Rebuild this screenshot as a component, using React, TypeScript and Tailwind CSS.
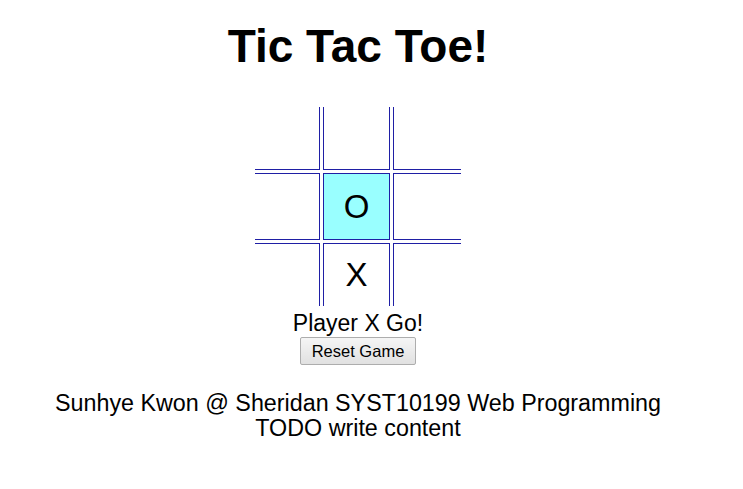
const board = [
  ["", "", ""],
  ["", "O", ""],
  ["", "X", ""],
];

const cells = [
  ["w-[65px] h-[63px] border-r border-b", "w-[67px] h-[63px] border-x border-b", "w-[68px] h-[63px] border-l border-b"],
  ["w-[65px] h-[67px] border-r border-y", "w-[67px] h-[67px] border-x border-y bg-[#99ffff]", "w-[68px] h-[67px] border-l border-y"],
  ["w-[65px] h-[63px] border-r border-t", "w-[67px] h-[63px] border-x border-t", "w-[68px] h-[63px] border-l border-t"],
];

export default function App() {
  return (
    <div className="w-[716px] text-center text-black font-['Liberation_Sans',Arial,sans-serif]">
      <h1 className="pt-[19px] text-[46px] leading-[54px] font-bold">Tic Tac Toe!</h1>
      <div className="mt-[34px] flex justify-center">
        <div className="flex flex-col gap-[3px]">
          {board.map((row, r) => (
            <div key={r} className="flex gap-[3px]">
              {row.map((cell, c) => (
                <div
                  key={c}
                  className={"border-solid border-[#1f1fa5] flex items-center justify-center text-[33px] " + cells[r][c]}
                >
                  {cell}
                </div>
              ))}
            </div>
          ))}
        </div>
      </div>
      <p className="mt-[3px] text-[23px] leading-[28px]">Player X Go!</p>
      <button className="px-[11px] h-[28px] text-[16.5px] leading-[20px] border border-[#adadad] rounded-[2px] bg-gradient-to-b from-[#f5f5f5] to-[#e1e1e1]">
        Reset Game
      </button>
      <div className="mt-[26px] text-[23.3px] leading-[25px]">
        <p>Sunhye Kwon @ Sheridan SYST10199 Web Programming</p>
        <p>TODO write content</p>
      </div>
    </div>
  );
}
